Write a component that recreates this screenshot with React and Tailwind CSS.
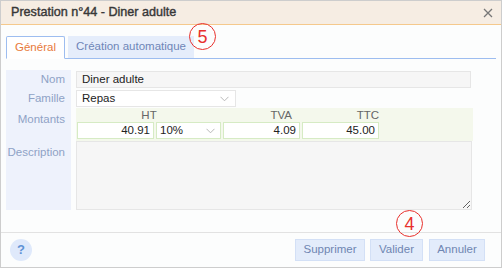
import React from 'react';

const font = { fontFamily: '"Liberation Sans", Arial, sans-serif' };

const Chevron = ({ className }) => (
  <svg className={className} width="9" height="6" viewBox="0 0 9 6" fill="none">
    <path d="M0.5 0.8 L4.5 4.8 L8.5 0.8" stroke="#b8b8b8" strokeWidth="1" />
  </svg>
);

const Marker = ({ n, className }) => (
  <div
    className={`absolute w-[27px] h-[27px] rounded-full border-[1.5px] border-[#e8302c] flex items-center justify-center text-[#e8302c] text-[18px] leading-none ${className}`}
  >
    {n}
  </div>
);

const App = () => {
  return (
    <div
      className="relative w-[502px] h-[268px] border border-[#cdcdcd] bg-[#fcfdfd] flex flex-col text-[11.5px] text-[#222]"
      style={font}
    >
      {/* header */}
      <div className="h-[24px] shrink-0 bg-[#f6ede3] border-b border-[#f5c98c] flex items-center justify-between pl-[10px] pr-[8px]">
        <span className="text-[12.6px] text-[#383838] [-webkit-text-stroke:0.4px_#383838]">
          Prestation n°44 - Diner adulte
        </span>
        <svg width="10" height="10" viewBox="0 0 10 10">
          <path d="M1 1 L9 9 M9 1 L1 9" stroke="#777" strokeWidth="1.3" />
        </svg>
      </div>

      {/* tabs */}
      <div className="mt-[11px] mx-[5px] h-[23px] flex items-end gap-[3px] border-b border-[#9dbdf0]">
        <div className="h-[23px] w-[59px] flex items-center justify-center bg-white border border-[#9dbdf0] border-b-white mb-[-1px] text-[#e8793a] rounded-t-[2px]">
          Général
        </div>
        <div className="h-[22px] w-[126px] flex items-center justify-center bg-[#e5edfb] text-[#6f86b8]">
          Création automatique
        </div>
      </div>

      {/* form */}
      <div className="mt-[11px] ml-[5px] mr-[28px] grid grid-cols-[65px_1fr] gap-x-[5px]">
        <div className="bg-[#eef2fc] h-[19px] flex items-center justify-end pr-[6px] text-[#8fa2c6]">Nom</div>
        <div className="pt-[1px]">
          <div className="h-[17px] w-[395px] bg-[#f6f6f6] border border-[#e6e6e6] flex items-center px-[5px]">
            Diner adulte
          </div>
        </div>

        <div className="bg-[#eef2fc] h-[19px] flex items-center justify-end pr-[6px] text-[#8fa2c6]">Famille</div>
        <div className="pt-[1px]">
          <div className="h-[17px] w-[160px] bg-white border border-[#e6e6e6] flex items-center justify-between pl-[5px] pr-[6px]">
            <span>Repas</span>
            <Chevron />
          </div>
        </div>

        <div className="bg-[#eef2fc] h-[33px] flex items-start justify-end pr-[6px] pt-[3px] text-[#8fa2c6]">Montants</div>
        <div className="h-[33px] w-[397px] bg-[#f4f8ec]">
          <div className="h-[14px] flex gap-[2px] pl-[1px] text-[#666] leading-[14px]">
            <div className="w-[144px] text-center">HT</div>
            <div className="w-[77px] text-right pr-[8px]">TVA</div>
            <div className="w-[77px] text-right">TTC</div>
          </div>
          <div className="flex gap-[2px] pl-[1px]">
            <div className="w-[77px] h-[17px] bg-white border border-[#d6ebc4] flex items-center justify-end pr-[3px]">40.91</div>
            <div className="w-[65px] h-[17px] bg-white border border-[#d6ebc4] flex items-center justify-between pl-[3px] pr-[5px]">
              <span>10%</span>
              <Chevron />
            </div>
            <div className="w-[77px] h-[17px] bg-white border border-[#d6ebc4] flex items-center justify-end pr-[3px]">4.09</div>
            <div className="w-[77px] h-[17px] bg-white border border-[#d6ebc4] flex items-center justify-end pr-[3px]">45.00</div>
          </div>
        </div>

        <div className="bg-[#eef2fc] h-[69px] flex items-start justify-end pr-[6px] pt-[3px] text-[#8fa2c6]">Description</div>
        <div>
          <textarea
            readOnly
            className="block w-[396px] h-[69px] bg-[#f6f6f6] border border-[#e6e6e6] outline-none"
            style={font}
          />
        </div>
      </div>

      {/* footer */}
      <div className="mt-auto h-[35px] border-t border-[#e2e2e2] bg-[#fcfdfd] flex items-center justify-between pl-[9px] pr-[16px]">
        <div className="w-[22px] h-[22px] rounded-full bg-[#dfe9fb] flex items-center justify-center text-[#5f93d6] font-bold text-[13px]">
          ?
        </div>
        <div className="flex gap-[5px] text-[#6f86b2]">
          <div className="h-[22px] w-[70px] bg-[#e3ecfb] border border-[#d3e0f6] flex items-center justify-center">Supprimer</div>
          <div className="h-[22px] w-[53px] bg-[#e3ecfb] border border-[#d3e0f6] flex items-center justify-center">Valider</div>
          <div className="h-[22px] w-[56px] bg-[#e3ecfb] border border-[#d3e0f6] flex items-center justify-center ml-[1px]">Annuler</div>
        </div>
      </div>

      <Marker n="5" className="left-[188px] top-[22px]" />
      <Marker n="4" className="left-[395px] top-[209px]" />
    </div>
  );
};

export default App;
